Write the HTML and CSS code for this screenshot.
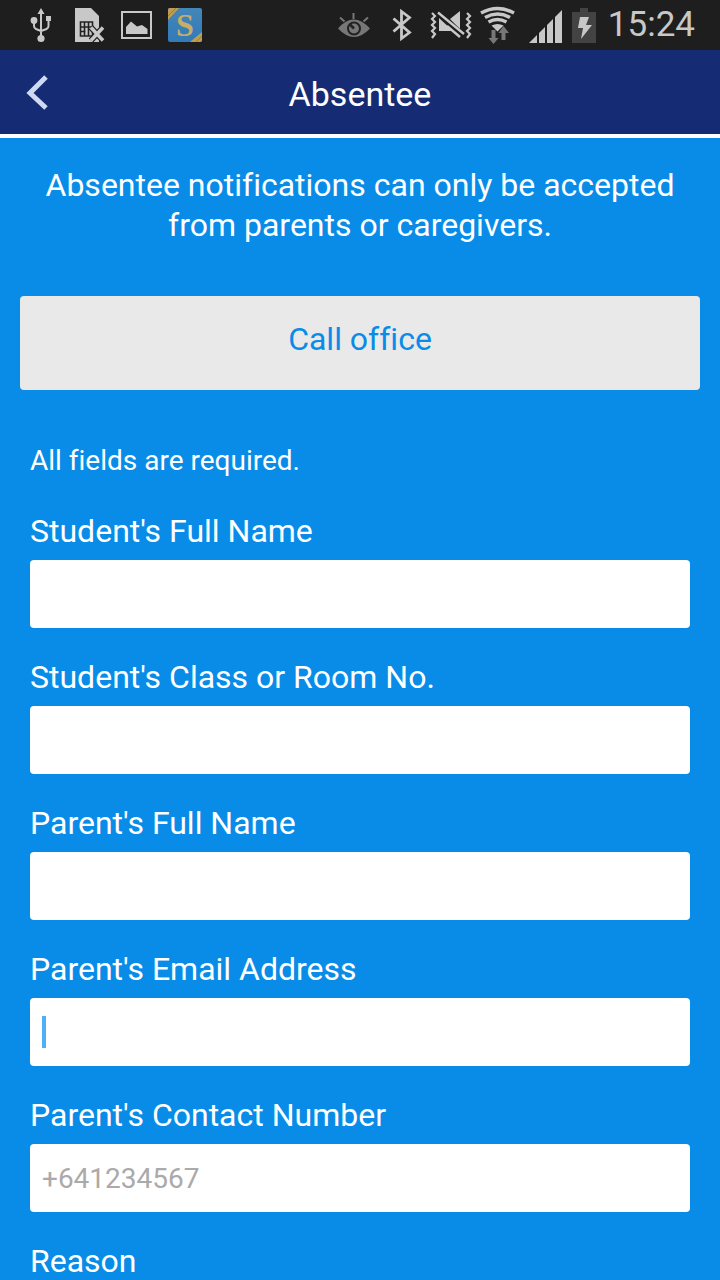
FILE: index.html
```html
<!DOCTYPE html>
<html lang="en">
<head>
<meta charset="utf-8">
<meta name="viewport" content="width=device-width, initial-scale=1">
<title>Absentee</title>
<link rel="stylesheet" href="styles.css">
</head>
<body>
<div class="status-bar">
  <div class="status-group status-notices">
    <svg width="29" height="50" viewBox="30 0 29 50" role="img" aria-label="USB connected">
      <g fill="none" stroke="#c8c8c8" stroke-width="2"><path d="M41 13V38M34 21v5q0 2 2 3l5 2M48.500 19v7q0 2-2 3l-5.500 2"/></g>
      <path fill="#c8c8c8" d="M41 8l3.500 6h-7zM46 16h5v5h-5z"/><circle cx="34" cy="20.500" r="3.400" fill="#c8c8c8"/><circle cx="41" cy="38.500" r="3.600" fill="#c8c8c8"/>
    </svg>
    <svg width="30" height="50" viewBox="75 0 30 50" role="img" aria-label="No SIM">
      <path fill="#c8c8c8" d="M75 8h16l8 8v26H75z"/>
      <path d="M80.500 22h12v14h-12zM84.500 22v14M80.500 27h12M80.500 31.500h5M88.500 22v14" fill="none" stroke="#222" stroke-width="1.600"/>
      <path d="M91 27.500l12 13M103 27.500l-12 13" fill="none" stroke="#1e1e1e" stroke-width="6"/>
      <path d="M91 27.500l12 13M103 27.500l-12 13" fill="none" stroke="#c8c8c8" stroke-width="3.500"/>
    </svg>
    <svg width="31" height="50" viewBox="121 0 31 50" role="img" aria-label="Screenshot saved">
      <path d="M122 12h29v26h-29z" fill="none" stroke="#c8c8c8" stroke-width="2"/>
      <path d="M126 34v-7l5-5.500 6 5 5-1.500 5.500 4v5z" fill="#c8c8c8"/>
    </svg>
    <svg width="34" height="50" viewBox="168 0 34 50" role="img" aria-label="School app">
      <defs><linearGradient id="badge" x2="0" y2="1"><stop stop-color="#4486b8"/><stop offset="1" stop-color="#317bb8"/></linearGradient></defs>
      <rect x="168" y="8" width="34" height="34" rx="2" fill="url(#badge)"/>
      <path d="M168 18V10q0-2 2-2h9l-11 12zM202 32v8q0 2-2 2h-10z" fill="#c09e51"/>
      <path d="M168 16l8-8M202 36l-6 6" stroke="#8c814f"/>
      <text x="185" y="36" text-anchor="middle" class="badge-letter">S</text>
    </svg>
  </div>
  <div class="status-group">
    <svg width="44" height="50" viewBox="337 0 44 50" role="img" aria-label="Smart stay">
      <path d="M337 28.500q15.500-18 32 0q-16 17-32 0z" fill="#777"/>
      <circle cx="353" cy="28.500" r="6" fill="none" stroke="#222" stroke-width="2"/>
      <path d="M353 28.500l-4-4" stroke="#222" stroke-width="2.500"/>
      <path d="M339 17.500l4.500 4M352.500 13v6M367 17.500l-4.500 4" stroke="#777" stroke-width="2"/>
    </svg>
    <svg width="32" height="50" viewBox="389 0 32 50" role="img" aria-label="Bluetooth">
      <path d="M392.500 18.500l16 14-8 6V11.500l8 6-16 14" fill="none" stroke="#c8c8c8" stroke-width="2.800"/>
    </svg>
    <svg width="42" height="50" viewBox="429 0 42 50" role="img" aria-label="Vibrate">
      <path d="M438 18l14 13H438zM449 19l10-8v18z" fill="#c8c8c8"/>
      <path d="M435 11l26 23" stroke="#1e1e1e" stroke-width="5"/>
      <path d="M437 12.500l26 21.500M446 26l13 11" stroke="#c8c8c8" stroke-width="2.400"/>
      <path d="M431 13l3 3-3 3 3 3-3 3 3 3-3 3 3 3-3 4M466 13l3 3-3 3 3 3-3 3 3 3-3 3 3 3-3 4" fill="none" stroke="#c8c8c8" stroke-width="2.200"/>
    </svg>
    <svg width="41" height="50" viewBox="479 0 41 50" role="img" aria-label="Wi-Fi">
      <path d="M480 13q16.500-9 33 0M484 17.500q12.500-7 25 0M487.500 22q9-5 18 0" fill="none" stroke="#c8c8c8" stroke-width="3.400"/>
      <path d="M490.500 25.500q6-3 12 0l-6 6z" fill="#c8c8c8"/>
      <path d="M490.500 30h4v8h3l-5 6-5-6h3zM500.500 40v-7h-3l5-7 5.500 7h-3.500v7z" fill="#777"/>
    </svg>
    <svg width="35" height="50" viewBox="528 0 35 50" role="img" aria-label="Mobile signal">
      <path d="M528 43l8-8v8zM538 43V33l6-6v16zM546 43V25l6-6v24zM554 43V17l7-7v33z" fill="#c8c8c8"/>
    </svg>
    <svg width="28" height="50" viewBox="571 0 28 50" role="img" aria-label="Battery charging">
      <path d="M571 12h8V8h8v4h8v31h-24z" fill="#434343"/>
      <path d="M579 17h9l-3 8h6l-11 14 2-11h-5z" fill="#c8c8c8"/>
    </svg>
    <time class="clock">15:24</time>
  </div>
</div>
<header class="app-header">
  <button class="back" type="button" aria-label="Back">
    <svg width="24" height="36" viewBox="0 0 24 36"><path d="M21 3L5 19l16 15" fill="none" stroke="#cfd9f0" stroke-width="5"/></svg>
  </button>
  <h1 class="title">Absentee</h1>
</header>
<main class="content">
  <p class="intro">Absentee notifications can only be accepted from parents or caregivers.</p>
  <button class="call" type="button">Call office</button>
  <form class="form">
    <p class="note">All fields are required.</p>
    <div class="field">
      <label for="student">Student's Full Name</label>
      <input id="student" type="text">
    </div>
    <div class="field">
      <label for="room">Student's Class or Room No.</label>
      <input id="room" type="text">
    </div>
    <div class="field">
      <label for="parent">Parent's Full Name</label>
      <input id="parent" type="text">
    </div>
    <div class="field field-active">
      <label for="email">Parent's Email Address</label>
      <input id="email" type="email">
    </div>
    <div class="field">
      <label for="phone">Parent's Contact Number</label>
      <input id="phone" type="tel" placeholder="+641234567">
    </div>
    <div class="field"><span class="label">Reason</span></div>
  </form>
</main>
</body>
</html>
```
FILE: styles.css
```css
* {
  box-sizing: border-box;
}

body {
  margin: 0;
  min-height: 100vh;
  background: #088ce8;
  color: #fff;
  font-family: Roboto, "Noto Sans", sans-serif;
  font-size: 32px;
  font-variant-ligatures: none;
}

p,
h1 {
  margin: 0;
  font-weight: 400;
}

svg {
  display: block;
}

.status-bar {
  display: flex;
  justify-content: space-between;
  height: 50px;
  padding: 0 25px 0 30px;
  background: #1e1e1e;
  color: #c8c8c8;
}

.status-group {
  display: flex;
  gap: 8px;
}

.status-notices {
  gap: 16px;
}

.badge-letter {
  fill: #c8ad68;
  font: bold 32px "Liberation Serif", serif;
}

.clock {
  font-size: 35px;
  line-height: 50px;
}

.app-header {
  display: grid;
  grid-template-columns: 72px 1fr 72px;
  align-items: center;
  height: 88px;
  border-bottom: 4px solid #fff;
  background: #152b74;
}

.back {
  padding: 0 0 0 25px;
  border: 0;
  background: none;
}

.title {
  padding-top: 4px;
  font-size: 34px;
  line-height: 40px;
  text-align: center;
}

.content {
  padding: 27px 20px 0;
}

.intro {
  line-height: 40px;
  text-align: center;
}

.call {
  display: block;
  width: 100%;
  margin: 51px 0 50px;
  padding: 24px 0 32px;
  border: 0;
  border-radius: 4px;
  background: #e9e9e9;
  color: #088ce8;
  font: inherit;
  line-height: 38px;
}

.form {
  display: grid;
  gap: 30px;
  padding: 0 10px;
}

.note {
  font-size: 28px;
  line-height: 42px;
}

.field {
  display: grid;
  gap: 10px;
  position: relative;
}

.field label,
.label {
  line-height: 38px;
}

.field input {
  width: 100%;
  height: 68px;
  padding: 0 12px;
  border: 0;
  border-radius: 4px;
  background: #fff;
  color: #333;
  font: inherit;
  font-size: 28px;
}

.field input::placeholder {
  color: #aaa;
}

.field-active::after {
  content: "";
  position: absolute;
  left: 12px;
  bottom: 18px;
  width: 4px;
  height: 32px;
  background: #4fb0f8;
}
```
